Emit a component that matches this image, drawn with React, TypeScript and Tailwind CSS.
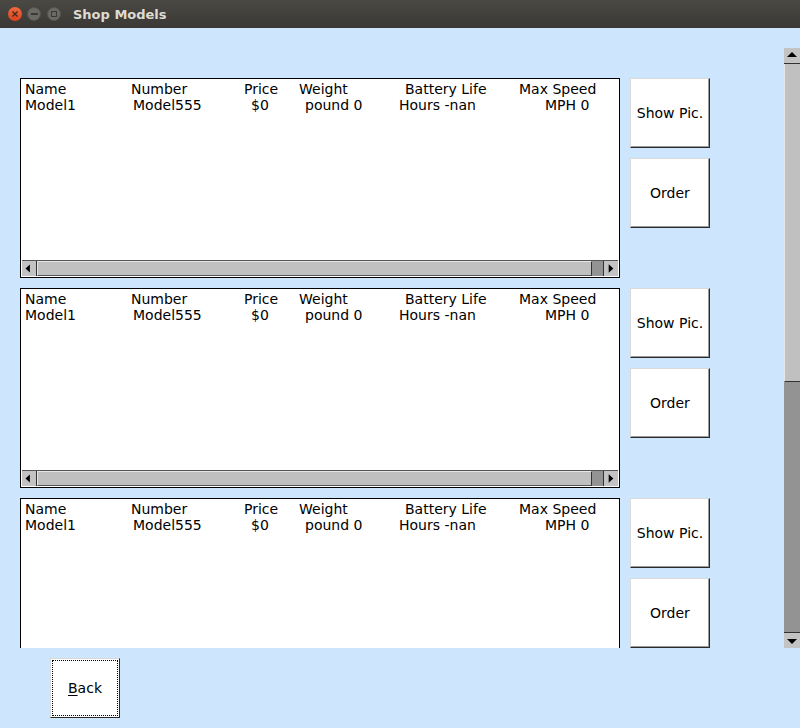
import React from "react";

const headers = [
  { label: "Name", w: "w-[106px]" },
  { label: "Number", w: "w-[113px]" },
  { label: "Price", w: "w-[55px]" },
  { label: "Weight", w: "w-[106px]" },
  { label: "Battery Life", w: "w-[114px]" },
  { label: "Max Speed", w: "w-auto" },
];

const values = [
  { label: "Model1", w: "w-[108px]" },
  { label: "Model555", w: "w-[118px]" },
  { label: "$0", w: "w-[54px]" },
  { label: "pound 0", w: "w-[94px]" },
  { label: "Hours -nan", w: "w-[146px]" },
  { label: "MPH 0", w: "w-auto" },
];

const ArrowLeft = () => (
  <svg width="16" height="15" viewBox="0 0 16 15">
    <polygon points="4,7.5 9,3 9,12" fill="#000" />
  </svg>
);

const ArrowRight = () => (
  <svg width="15" height="15" viewBox="0 0 15 15">
    <polygon points="10,7.5 5,3 5,12" fill="#000" />
  </svg>
);

const ArrowUp = () => (
  <svg width="16" height="15" viewBox="0 0 16 15">
    <polygon points="8,4 3,9 13,9" fill="#000" />
  </svg>
);

const ArrowDown = () => (
  <svg width="16" height="15" viewBox="0 0 16 15">
    <polygon points="8,11 3,6 13,6" fill="#000" />
  </svg>
);

const TkButton = ({ label }: { label: string }) => (
  <button className="w-[80px] h-[70px] bg-white border border-t-[#d9d9d9] border-l-[#d9d9d9] border-b-[#2b2b2b] border-r-[#2b2b2b] shadow-[inset_-1px_-1px_0_#9a9a9a] text-[14px] text-black">
    {label}
  </button>
);

const ModelPanel = () => (
  <div className="flex">
    <div className="w-[600px] h-[200px] border border-black bg-white flex flex-col shrink-0">
      <div className="flex-1 pl-[4px] pt-[2px] leading-[16px] text-[14px] text-black">
        <div className="flex whitespace-nowrap">
          {headers.map((h) => (
            <span key={h.label} className={h.w}>
              {h.label}
            </span>
          ))}
        </div>
        <div className="flex whitespace-nowrap">
          {values.map((v) => (
            <span key={v.label} className={v.w}>
              {v.label}
            </span>
          ))}
        </div>
      </div>
      {/* horizontal scrollbar */}
      <div className="h-[16px] mx-[1px] mb-[1px] flex bg-[#939393] border-t border-[#555]">
        <div className="w-[15px] bg-[#c3c3c3] border-r border-[#333] flex items-center justify-center">
          <ArrowLeft />
        </div>
        <div className="w-[555px] bg-[#c0c0c0] border-t border-l border-[#e6e6e6] border-r-[#333] border-r border-b border-b-[#555]" />
        <div className="flex-1" />
        <div className="w-[15px] bg-[#c3c3c3] border-l border-[#333] flex items-center justify-center">
          <ArrowRight />
        </div>
      </div>
    </div>
    <div className="ml-[10px] flex flex-col gap-[10px]">
      <TkButton label="Show Pic." />
      <TkButton label="Order" />
    </div>
  </div>
);

export default function App() {
  return (
    <div
      className="w-[800px] h-[728px] bg-[#cde6fd] flex flex-col overflow-hidden"
      style={{ fontFamily: '"DejaVu Sans", sans-serif' }}
    >
      {/* title bar */}
      <div className="h-[28px] bg-gradient-to-b from-[#4a4944] to-[#393834] flex items-center pl-[8px] shrink-0">
        <div className="w-[14px] h-[14px] rounded-full bg-gradient-to-b from-[#f0693e] to-[#d9431c] flex items-center justify-center">
          <svg width="8" height="8" viewBox="0 0 8 8">
            <path d="M1.5 1.5 L6.5 6.5 M6.5 1.5 L1.5 6.5" stroke="#3a2a20" strokeWidth="1.3" />
          </svg>
        </div>
        <div className="ml-[5px] w-[14px] h-[14px] rounded-full bg-[#6b6a65] border border-[#55544f] flex items-center justify-center">
          <div className="w-[7px] h-[2px] bg-[#3a3935]" />
        </div>
        <div className="ml-[6px] w-[14px] h-[14px] rounded-full bg-[#6b6a65] border border-[#55544f] flex items-center justify-center">
          <div className="w-[6px] h-[6px] border border-[#3a3935]" />
        </div>
        <span className="ml-[12px] mt-[2px] text-[13px] font-bold text-[#dfdbd2]">Shop Models</span>
      </div>

      {/* scrolled canvas */}
      <div className="h-[620px] flex shrink-0">
        <div className="flex-1 overflow-hidden pt-[50px] pl-[20px] flex flex-col gap-[10px]">
          <ModelPanel />
          <ModelPanel />
          <ModelPanel />
        </div>
        {/* vertical scrollbar */}
        <div className="w-[16px] mt-[20px] flex flex-col bg-[#939393]">
          <div className="h-[16px] bg-[#c3c3c3] border-b border-[#333] flex items-center justify-center">
            <ArrowUp />
          </div>
          <div className="h-[318px] bg-[#c0c0c0] border-l border-[#e6e6e6] border-b border-b-[#333]" />
          <div className="flex-1" />
          <div className="h-[16px] bg-[#c3c3c3] border-t border-[#333] flex items-center justify-center">
            <ArrowDown />
          </div>
        </div>
      </div>

      {/* bottom */}
      <div className="pl-[50px] pt-[10px]">
        <button className="w-[70px] h-[60px] bg-white border border-t-[#d9d9d9] border-l-[#d9d9d9] border-b-[#2b2b2b] border-r-[#2b2b2b] p-[1px]">
          <div className="w-full h-full border border-dotted border-black flex items-center justify-center text-[14px] text-black">
            <span>
              <span className="underline underline-offset-2">B</span>ack
            </span>
          </div>
        </button>
      </div>
    </div>
  );
}
